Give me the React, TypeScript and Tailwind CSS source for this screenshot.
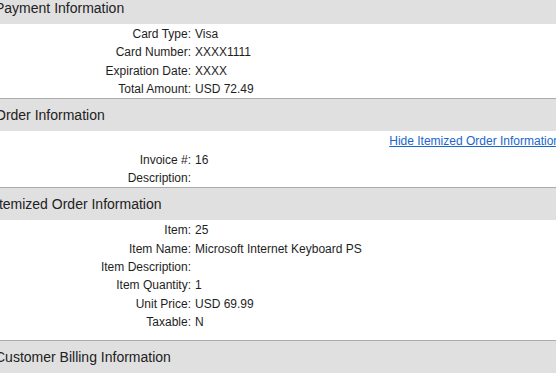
import React from "react";

type Row = { label: string; value: string };

function Header({ title }: { title: string }) {
  return (
    <div className="flex h-[33px] items-center border-t border-[#acacac] bg-[#e0e0e0] text-[14px] text-[#222]">
      <span>{title}</span>
    </div>
  );
}

function Rows({ rows }: { rows: Row[] }) {
  return (
    <div className="flex flex-col">
      {rows.map((r) => (
        <div key={r.label} className="flex h-[18.33px] items-center">
          <div className="w-[199px] shrink-0 pr-[3px] text-right">{r.label}:</div>
          <div className="pl-[1px]">{r.value}</div>
        </div>
      ))}
    </div>
  );
}

export default function App() {
  return (
    <div className="-mt-[9px] -ml-[5px] w-[566px] font-['Liberation_Sans',Arial,sans-serif] text-[12px] text-[#1e1e1e] bg-white">
      <Header title="Payment Information" />
      <div className="pt-[1px]">
        <Rows
          rows={[
            { label: "Card Type", value: "Visa" },
            { label: "Card Number", value: "XXXX1111" },
            { label: "Expiration Date", value: "XXXX" },
            { label: "Total Amount", value: "USD 72.49" },
          ]}
        />
      </div>
      <Header title="Order Information" />
      <div className="pt-[1px]">
        <div className="flex h-[18.33px] items-center justify-end pr-[1px]">
          <a href="#" className="text-[#1a66cc] underline">
            Hide Itemized Order Information
          </a>
        </div>
        <Rows
          rows={[
            { label: "Invoice #", value: "16" },
            { label: "Description", value: "" },
          ]}
        />
      </div>
      <Header title="Itemized Order Information" />
      <div className="pt-[1px] pb-[9px]">
        <Rows
          rows={[
            { label: "Item", value: "25" },
            { label: "Item Name", value: "Microsoft Internet Keyboard PS" },
            { label: "Item Description", value: "" },
            { label: "Item Quantity", value: "1" },
            { label: "Unit Price", value: "USD 69.99" },
            { label: "Taxable", value: "N" },
          ]}
        />
      </div>
      <Header title="Customer Billing Information" />
      <div className="h-[40px]" />
    </div>
  );
}
